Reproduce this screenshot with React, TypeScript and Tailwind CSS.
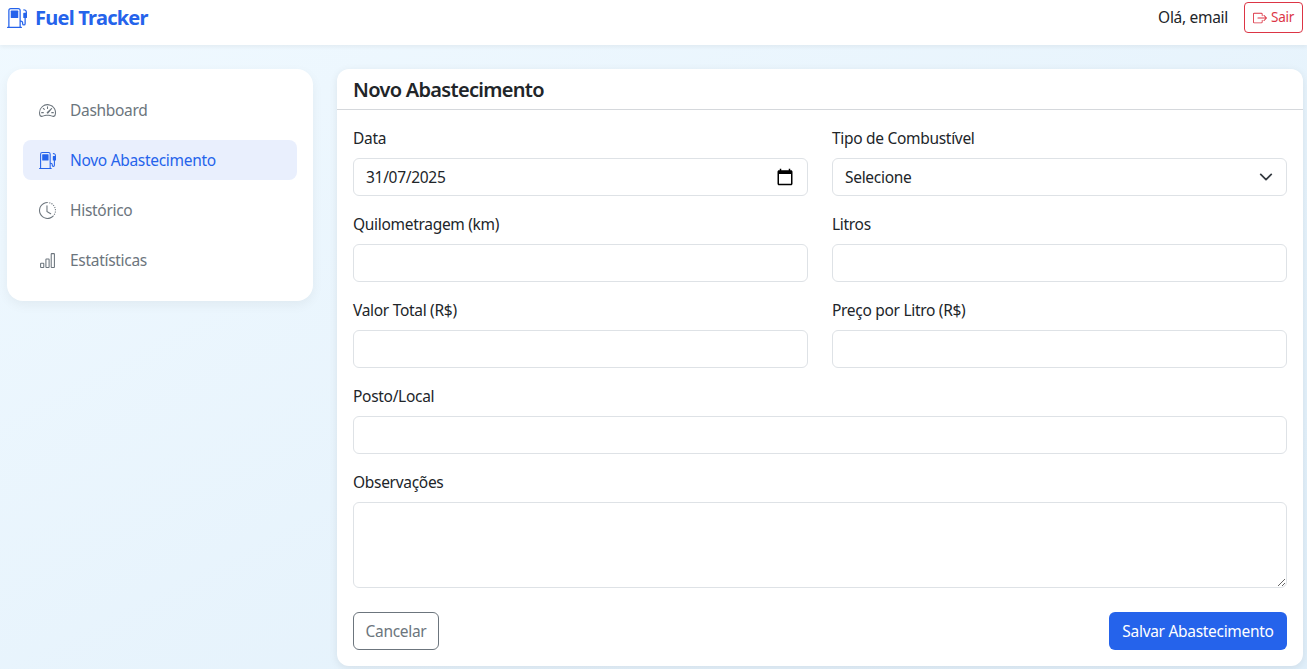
import { BsBarChart, BsBoxArrowRight, BsClockHistory, BsFuelPump, BsSpeedometer2 } from 'react-icons/bs'

const fieldClass =
  'h-[38px] w-full rounded-md border border-[#dee2e6] bg-white px-3 text-[15.5px] text-[#212529] outline-none'

const navItems = [
  { label: 'Dashboard', icon: BsSpeedometer2 },
  { label: 'Novo Abastecimento', icon: BsFuelPump, active: true },
  { label: 'Histórico', icon: BsClockHistory },
  { label: 'Estatísticas', icon: BsBarChart },
]

function Label({ children }: { children: string }) {
  return <label className="mb-2 block h-6 text-[15.5px] leading-6 text-[#212529]">{children}</label>
}

function TextField({ label }: { label: string }) {
  return (
    <div>
      <Label>{label}</Label>
      <input type="text" className={fieldClass} />
    </div>
  )
}

export default function App() {
  return (
    <div className="flex h-screen flex-col overflow-hidden bg-gradient-to-br from-[#f0f9ff] to-[#e0effa] font-['Noto_Sans',sans-serif] tracking-[-0.3px]">
      {/* Navbar */}
      <header className="flex h-[45px] shrink-0 items-start justify-between bg-white pl-[7px] pr-1 shadow-[0_2px_4px_rgba(0,0,0,0.05)]">
        <a className="flex h-9 items-center gap-2 text-[20px] font-bold tracking-[-0.75px] text-[#2563eb]">
          <BsFuelPump className="size-5" />
          Fuel Tracker
        </a>
        <div className="flex items-center gap-4 pt-[2px]">
          <span className="text-[15.5px] text-[#212529]">Olá, email</span>
          <button className="flex h-[31px] w-[59px] items-center justify-center gap-1 rounded border border-[#dc3545] text-[13.5px] text-[#dc3545]">
            <BsBoxArrowRight className="size-[14px]" />
            Sair
          </button>
        </div>
      </header>

      <div className="flex flex-1 items-start gap-6 pl-[7px] pr-1 pt-6">
        {/* Sidebar */}
        <aside className="flex h-[232px] w-[306px] shrink-0 flex-col gap-[10px] rounded-2xl bg-white px-4 py-[21px] shadow-[0_4px_12px_rgba(0,0,0,0.05)]">
          {navItems.map((item) => (
            <a
              key={item.label}
              className={`flex h-10 items-center gap-[14px] rounded-lg pl-4 pr-[15px] text-[15.5px] ${
                item.active ? 'bg-[#e9effd] text-[#2563eb]' : 'text-[#6c757d]'
              }`}
            >
              <item.icon className="size-[17px]" />
              <span className="pt-[2px]">{item.label}</span>
            </a>
          ))}
        </aside>

        {/* Form card */}
        <main className="flex-1 rounded-xl bg-white shadow-[0_2px_8px_rgba(0,0,0,0.08)]">
          <div className="flex h-[41px] items-center border-b border-[#d5d8dc] px-4 pt-[2px]">
            <h1 className="text-[20px] font-semibold tracking-[-0.7px] text-[#212529]">Novo Abastecimento</h1>
          </div>
          <form className="flex flex-col gap-4 p-4">
            <div className="grid grid-cols-2 gap-x-6 gap-y-4">
              <div>
                <Label>Data</Label>
                <div className="relative">
                  <input type="text" defaultValue="31/07/2025" className={fieldClass} />
                  <svg viewBox="0 0 24 24" className="absolute right-[14px] top-[10px] size-[18px] fill-black">
                    <path d="M20 3h-1V1h-2v2H7V1H5v2H4c-1.1 0-2 .9-2 2v16c0 1.1.9 2 2 2h16c1.1 0 2-.9 2-2V5c0-1.1-.9-2-2-2zm0 18H4V8h16v13z" />
                  </svg>
                </div>
              </div>
              <div>
                <Label>Tipo de Combustível</Label>
                <div className="relative">
                  <select className={`${fieldClass} appearance-none pt-[2px]`}>
                    <option>Selecione</option>
                  </select>
                  <svg viewBox="0 0 16 16" className="absolute right-[14px] top-[12px] size-[14px] fill-none stroke-[#343a40]">
                    <path d="m2 5 6 6 6-6" strokeWidth="2" strokeLinecap="round" strokeLinejoin="round" />
                  </svg>
                </div>
              </div>
              <TextField label="Quilometragem (km)" />
              <TextField label="Litros" />
              <TextField label="Valor Total (R$)" />
              <TextField label="Preço por Litro (R$)" />
            </div>
            <TextField label="Posto/Local" />
            <div>
              <Label>Observações</Label>
              <textarea className="block h-[86px] w-full rounded-md border border-[#dee2e6] bg-white px-3 py-2 outline-none" />
            </div>
            <div className="mt-2 flex justify-between">
              <button type="button" className="h-[38px] w-[86px] rounded-md border border-[#6c757d] pt-[2px] text-[15.5px] text-[#6c757d]">
                Cancelar
              </button>
              <button type="button" className="h-[38px] w-[178px] rounded-md bg-[#2563eb] pt-[2px] text-[15.5px] text-white">
                Salvar Abastecimento
              </button>
            </div>
          </form>
        </main>
      </div>
    </div>
  )
}
